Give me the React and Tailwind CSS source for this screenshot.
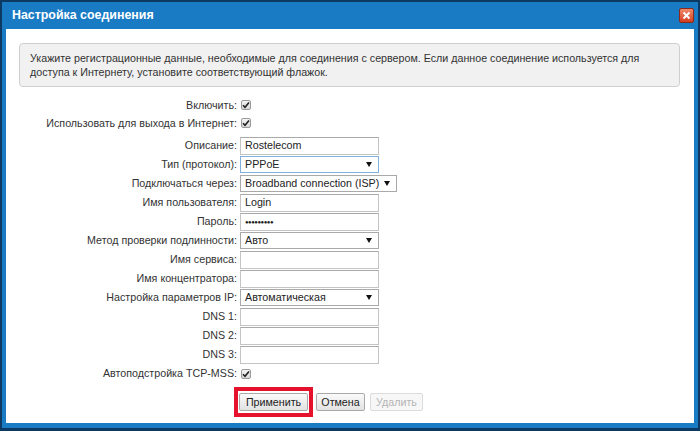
import React from 'react';

function Check() {
    return (
        <span className="flex items-center justify-center w-[10px] h-[10px] border border-[#9a9a9a] rounded-[2px] bg-gradient-to-b from-[#f4f4f4] to-[#d8d8d8]">
            <svg width="8" height="8" viewBox="0 0 8 8">
                <path d="M1 4.2 L3 6.3 L7 1.5" fill="none" stroke="#222" strokeWidth="1.6" />
            </svg>
        </span>
    );
}

function TextBox({ value, width = 'w-[139px]', children }) {
    return (
        <div className={`${width} h-[18px] border border-[#c4c4c4] border-t-[#a9a9a9] bg-white flex items-center px-[4px] text-[10.7px] text-[#222]`}>
            {children || value}
        </div>
    );
}

function SelectBox({ value, width = 'w-[139px]', blue }) {
    return (
        <div className={`${width} h-[17px] border ${blue ? 'border-[#7fb0e0]' : 'border-[#a9a9a9]'} bg-white flex items-center justify-between pl-[4px] pr-[6px] text-[10.7px] text-[#222] whitespace-nowrap`}>
            <span>{value}</span>
            <svg width="6" height="5" viewBox="0 0 6 5">
                <path d="M0 0 H6 L3 5 Z" fill="#111" />
            </svg>
        </div>
    );
}

const rows = [
    { label: 'Описание:', control: <TextBox value="Rostelecom" /> },
    { label: 'Тип (протокол):', control: <SelectBox value="PPPoE" blue /> },
    { label: 'Подключаться через:', control: <SelectBox value="Broadband connection (ISP)" width="w-[157px]" /> },
    { label: 'Имя пользователя:', control: <TextBox value="Login" /> },
    {
        label: 'Пароль:',
        control: (
            <TextBox>
                <span className="text-[6px] tracking-[-0.5px] leading-none">●●●●●●●●●</span>
            </TextBox>
        ),
    },
    { label: 'Метод проверки подлинности:', control: <SelectBox value="Авто" /> },
    { label: 'Имя сервиса:', control: <TextBox /> },
    { label: 'Имя концентратора:', control: <TextBox /> },
    { label: 'Настройка параметров IP:', control: <SelectBox value="Автоматическая" /> },
    { label: 'DNS 1:', control: <TextBox /> },
    { label: 'DNS 2:', control: <TextBox /> },
    { label: 'DNS 3:', control: <TextBox /> },
];

export default function App() {
    return (
        <div className="w-[700px] h-[431px] bg-[#0c3a63] p-[2px] pb-[3px] font-['Liberation_Sans',Arial,sans-serif]">
            <div className="h-full bg-[#1a7bc5] flex flex-col px-[4px] pb-[5px]">
                {/* title bar */}
                <div className="h-[27px] flex items-center justify-between pl-[6px]">
                    <span className="text-white font-bold text-[12.4px]">Настройка соединения</span>
                    <span className="w-[15px] h-[15px] rounded-[2px] border border-[#8a2a1a] bg-gradient-to-b from-[#f08a6a] to-[#d23c1c] flex items-center justify-center">
                        <svg width="9" height="9" viewBox="0 0 9 9">
                            <path d="M1.5 1.5 L7.5 7.5 M7.5 1.5 L1.5 7.5" stroke="#fff" strokeWidth="2" />
                        </svg>
                    </span>
                </div>

                {/* body */}
                <div className="flex-1 bg-white">
                    <div className="mt-[14px] ml-[13px] mr-[14px] h-[44px] rounded-[4px] border border-[#cfcfcf] bg-[#f1f1f1] flex items-center pl-[10px] text-[10.7px] leading-[14px] text-[#333] whitespace-nowrap">
                        <p>
                            Укажите регистрационные данные, необходимые для соединения с сервером. Если данное соединение используется для<br />
                            доступа к Интернету, установите соответствующий флажок.
                        </p>
                    </div>

                    <div className="mt-[9px] flex flex-col text-[10.7px] text-[#333]">
                        <div className="h-[18px] flex items-center">
                            <span className="w-[231px] text-right">Включить:</span>
                            <span className="ml-[4px]"><Check /></span>
                        </div>
                        <div className="h-[18px] flex items-center">
                            <span className="w-[231px] text-right">Использовать для выхода в Интернет:</span>
                            <span className="ml-[4px]"><Check /></span>
                        </div>
                        <div className="h-[4px]" />
                        {rows.map((r) => (
                            <div key={r.label} className="h-[19px] flex items-center">
                                <span className="w-[231px] text-right">{r.label}</span>
                                <span className="ml-[3px]">{r.control}</span>
                            </div>
                        ))}
                        <div className="h-[19px] flex items-center">
                            <span className="w-[231px] text-right">Автоподстройка TCP-MSS:</span>
                            <span className="ml-[4px]"><Check /></span>
                        </div>

                        <div className="mt-[4px] ml-[228px] flex items-center">
                            <div className="border-[4px] border-[#e4122c] px-[1px] py-[2px]">
                                <button className="w-[69px] h-[18px] border border-[#a9a9a9] rounded-[2px] bg-gradient-to-b from-[#fafafa] to-[#e2e2e2] text-[10.7px] text-[#222]">
                                    Применить
                                </button>
                            </div>
                            <button className="ml-[3px] w-[49px] h-[18px] border border-[#a9a9a9] rounded-[2px] bg-gradient-to-b from-[#fafafa] to-[#e2e2e2] text-[10.7px] text-[#222]">
                                Отмена
                            </button>
                            <button disabled className="ml-[5px] w-[53px] h-[18px] border border-[#dcdcdc] rounded-[2px] bg-[#f7f7f7] text-[10.7px] text-[#b4b4b4]">
                                Удалить
                            </button>
                        </div>
                    </div>
                </div>
            </div>
        </div>
    );
}
